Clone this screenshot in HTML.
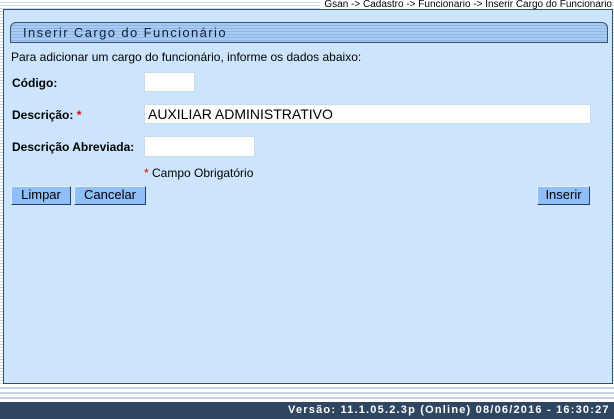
<!DOCTYPE html>
<html><head><meta charset="utf-8"><style>
body{margin:0;width:614px;height:419px;overflow:hidden;position:relative;font-family:"Liberation Sans",Arial,sans-serif;font-size:12px;background:repeating-linear-gradient(#fff 0 2px,#c8d8e8 2px 3px);}
.a{position:absolute}
#panel{left:3px;top:9px;width:608px;height:373px;background:#cce5fc;border:1px solid #35506a;}
#title{left:10px;top:22px;width:596px;height:19px;border:1px solid #38506a;border-radius:6px 6px 0 0;background:repeating-linear-gradient(#a8cbf2 0 2px,#8fb6e6 2px 3px);}
#title span{position:absolute;left:12px;top:2px;font-size:13px;letter-spacing:1.4px;color:#10203a}
.lbl{font-weight:bold;color:#000;font-size:12px}
.in{background:#fff;border:1px solid #c8dcee;height:20px;box-sizing:border-box}
.btn{background:#8fbef8;border:1px solid #26405e;border-top-color:#e0eeff;border-left-color:#e0eeff;height:19px;box-sizing:border-box;font-size:13px;text-align:center;line-height:16px;color:#000}
#foot{left:0;top:402px;width:614px;height:17px;background:#2e4660;color:#fff;font-weight:bold;font-size:11px;letter-spacing:1.2px;text-align:right;line-height:17px}
</style></head><body>
<div class="a" style="right:2px;top:-1px;font-size:10px;color:#000;background:#fff;padding-left:4px">Gsan -&gt; Cadastro -&gt; Funcionario -&gt; Inserir Cargo do Funcionario</div>
<div class="a" id="panel"></div>
<div class="a" id="title"><span>Inserir Cargo do Funcionário</span></div>
<div class="a" style="left:11px;top:50px">Para adicionar um cargo do funcionário, informe os dados abaixo:</div>
<div class="a lbl" style="left:12px;top:76px">Código:</div>
<div class="a in" style="left:144px;top:72px;width:51px"></div>
<div class="a lbl" style="left:12px;top:108px">Descrição:<span style="color:#e00000"> *</span></div>
<div class="a in" style="left:144px;top:104px;width:447px;font-size:14px;padding:2px 3px;line-height:15px">AUXILIAR ADMINISTRATIVO</div>
<div class="a lbl" style="left:12px;top:140px">Descrição Abreviada:</div>
<div class="a in" style="left:144px;top:136px;width:111px;height:21px"></div>
<div class="a" style="left:144px;top:166px"><span style="color:#e00000">*</span> Campo Obrigatório</div>
<div class="a btn" style="left:11px;top:186px;width:60px">Limpar</div>
<div class="a btn" style="left:74px;top:186px;width:72px">Cancelar</div>
<div class="a btn" style="left:537px;top:186px;width:53px">Inserir</div>
<div class="a" style="left:0;top:384px;width:614px;height:18px;background:repeating-linear-gradient(#fff 0 3px,#c6d6e6 3px 5px)"></div>
<div class="a" id="foot">Versão: 11.1.05.2.3p (Online) 08/06/2016 - 16:30:27&nbsp;</div>
</body></html>
